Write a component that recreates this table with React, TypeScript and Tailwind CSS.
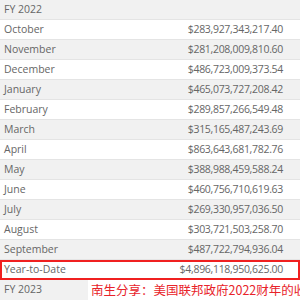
const rows: { label: string; amount: string }[] = [
  { label: "October", amount: "$283,927,343,217.40" },
  { label: "November", amount: "$281,208,009,810.60" },
  { label: "December", amount: "$486,723,009,373.54" },
  { label: "January", amount: "$465,073,727,208.42" },
  { label: "February", amount: "$289,857,266,549.48" },
  { label: "March", amount: "$315,165,487,243.69" },
  { label: "April", amount: "$863,643,681,782.76" },
  { label: "May", amount: "$388,988,459,588.24" },
  { label: "June", amount: "$460,756,710,619.63" },
  { label: "July", amount: "$269,330,957,036.50" },
  { label: "August", amount: "$303,721,503,258.70" },
  { label: "September", amount: "$487,722,794,936.04" },
];

export default function App() {
  return (
    <div
      className="relative w-[300px] h-[300px] overflow-hidden bg-white text-[10.5px] text-[#666]"
      style={{ fontFamily: '"Open Sans", "Noto Sans", sans-serif' }}
    >
      {/* FY header */}
      <div className="flex h-[20px] items-center border-b border-[#e4e4e4] bg-[#f1f1f1] pl-[4px]">
        FY 2022
      </div>

      {rows.map((r, i) => (
        <div
          key={r.label}
          className={
            "flex h-[20px] items-center justify-between border-b border-[#e4e4e4] pl-[4px] pr-[17px] " +
            (i % 2 === 0 ? "bg-white" : "bg-[#f1f1f1]")
          }
        >
          <span>{r.label}</span>
          <span className="tracking-[-0.3px]">{r.amount}</span>
        </div>
      ))}

      {/* Year-to-Date, highlighted */}
      <div className="flex h-[20px] items-center justify-between border-2 border-[#f02020] bg-white pl-[2px] pr-[15px]">
        <span>Year-to-Date</span>
        <span className="tracking-[-0.3px]">$4,896,118,950,625.00</span>
      </div>

      <div className="flex h-[20px] items-center bg-[#f1f1f1] pl-[4px]">FY 2023</div>

      {/* caption laid over the last row */}
      <div
        className="absolute left-[88px] top-[280px] whitespace-nowrap bg-white pl-[3px] text-[12.5px] leading-[20px] text-[#e8232a]"
        style={{ fontFamily: '"Noto Sans CJK SC", sans-serif' }}
      >
        南生分享：美国联邦政府2022财年的收入
      </div>
    </div>
  );
}
